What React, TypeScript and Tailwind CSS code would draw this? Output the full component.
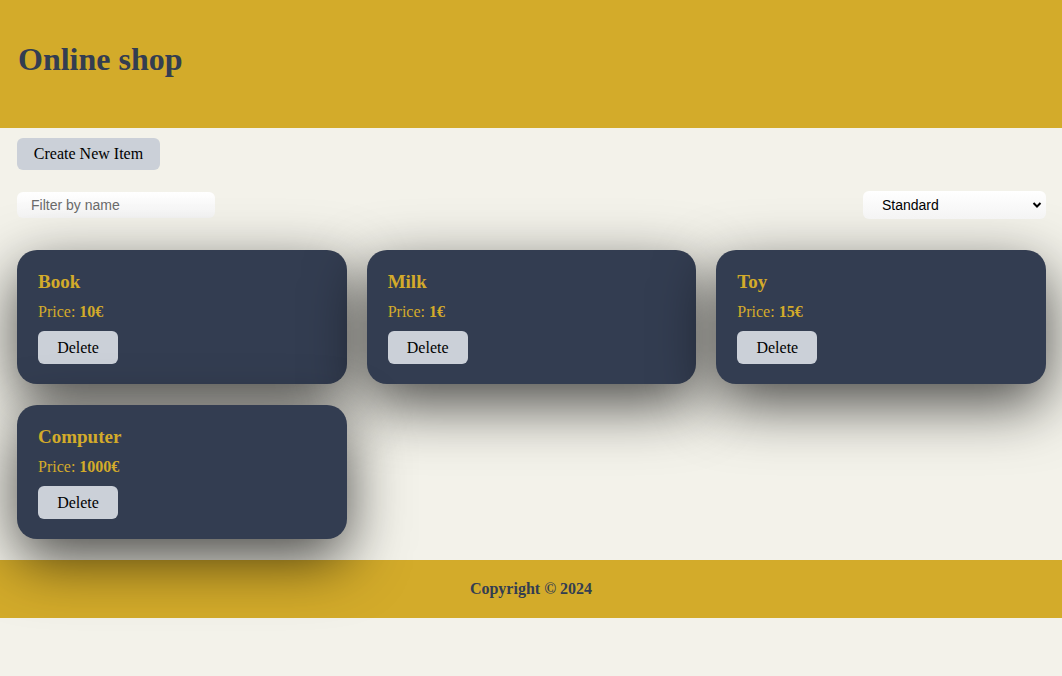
import React from "react";

const items = [
  { name: "Book", price: "10€" },
  { name: "Milk", price: "1€" },
  { name: "Toy", price: "15€" },
  { name: "Computer", price: "1000€" },
];

export default function App() {
  return (
    <div className="min-h-[676px] bg-[#f3f2ea] text-black" style={{ fontFamily: '"Liberation Serif", "Times New Roman", serif' }}>
      <header className="h-[128px] bg-[#d3ab2a] px-[18px] pt-[41px]">
        <h1 className="text-[32px] leading-[37px] font-bold text-[#333d51]">Online shop</h1>
      </header>
      <main className="pl-[17px] pr-[16px] pt-[10px] pb-[21px]">
        <button className="h-[32px] w-[143px] rounded-[6px] bg-[#cbd0d8] text-[16px] text-black">Create New Item</button>
        <div className="mt-[21px] flex items-center justify-between">
          <input
            placeholder="Filter by name"
            className="h-[26px] w-[198px] rounded-[6px] bg-gradient-to-b from-white to-[#f4f4f4] px-[14px] text-[14px] text-black placeholder:text-[#6b6b6b] outline-none"
            style={{ fontFamily: '"Liberation Sans", Arial, sans-serif' }}
          />
          <div
            className="relative flex h-[28px] w-[183px] items-center rounded-[6px] bg-gradient-to-b from-white to-[#f4f4f4] pl-[19px] text-[14px] text-black"
            style={{ fontFamily: '"Liberation Sans", Arial, sans-serif' }}
          >
            Standard
            <svg className="absolute right-[4px] top-[9px]" width="10" height="10" viewBox="0 0 10 10">
              <path d="M1.5 3 L5 6.5 L8.5 3" stroke="black" strokeWidth="2" fill="none" />
            </svg>
          </div>
        </div>
        <div className="mt-[31px] grid grid-cols-3 gap-x-[20px] gap-y-[21px]">
          {items.map((it) => (
            <div
              key={it.name}
              className="h-[134px] rounded-[20px] bg-[#333d51] px-[21px] pt-[20px] shadow-[0_20px_60px_rgba(0,0,0,0.7)]"
            >
              <h3 className="text-[19px] leading-[23px] font-bold text-[#d3ab2a]">{it.name}</h3>
              <p className="mt-[10px] text-[16px] leading-[18px] text-[#d3ab2a]">
                Price: <b>{it.price}</b>
              </p>
              <button className="mt-[10px] h-[33px] w-[80px] rounded-[6px] bg-[#cbd0d8] text-[16px] text-black">Delete</button>
            </div>
          ))}
        </div>
      </main>
      <footer className="flex h-[58px] items-center justify-center bg-[#d3ab2a] text-[16px] font-bold text-[#333d51]">
        Copyright © 2024
      </footer>
    </div>
  );
}
